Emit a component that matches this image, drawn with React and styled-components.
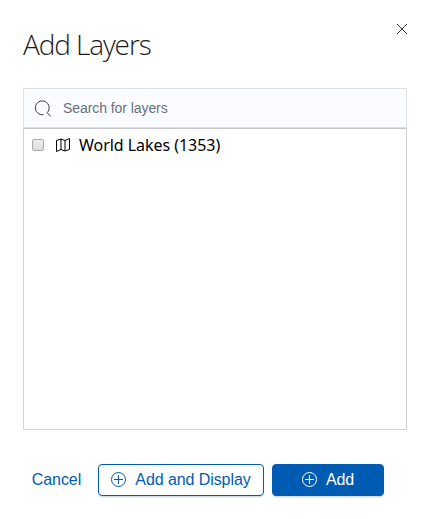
import React from 'react';
import styled, { createGlobalStyle } from 'styled-components';

const GlobalStyle = createGlobalStyle`
  * { box-sizing: border-box; }
  body { margin: 0; background: #fff; }
`;

const Modal = styled.section`
  display: flex;
  flex-direction: column;
  width: 430px;
  height: 519px;
  padding: 24px 23px 23px;
  background: #fff;
  font-family: "Liberation Sans", sans-serif;
`;

const Header = styled.header`
  display: flex;
  justify-content: space-between;
  height: 64px;
`;

const Title = styled.h1`
  margin: 0;
  font: 300 28px/40px "Open Sans", sans-serif;
  letter-spacing: -1.12px;
  color: #1a1c21;
`;

const CloseButton = styled.button`
  display: flex;
  width: 10px;
  height: 10px;
  margin: 0;
  padding: 0;
  border: 0;
  background: none;
  color: #343741;
`;

const SearchField = styled.label`
  display: flex;
  align-items: center;
  width: 384px;
  height: 40px;
  padding-left: 11px;
  gap: 12px;
  border: 1px solid #e0e0ef;
  border-bottom-color: #dddde8;
  background: #fbfcff;
  color: #343741;
`;

const SearchInput = styled.input`
  flex: 1;
  min-width: 0;
  height: 38px;
  padding: 0;
  border: 0;
  outline: 0;
  background: transparent;
  font: 14px "Liberation Sans", sans-serif;
  letter-spacing: -0.005em;
  &::placeholder { color: #69707d; opacity: 1; }
`;

const LayerList = styled.ul`
  width: 384px;
  height: 302px;
  margin: 0;
  padding: 4px 8px;
  border: 1px solid #d3d3d3;
  border-top-color: #c8c8ca;
  list-style: none;
`;

const LayerRow = styled.li`
  display: flex;
  align-items: center;
  height: 24px;
  font: 16px/24px "Noto Sans", sans-serif;
  letter-spacing: -0.04px;
  color: #000;
`;

const Checkbox = styled.input`
  appearance: none;
  width: 12px;
  height: 12px;
  margin: 0 12px 0 0;
  border: 1px solid #a9a9a9;
  border-radius: 2px;
  background: linear-gradient(#eee, #dcdcdc);
`;

const LayerName = styled.span`
  margin-left: 9px;
`;

const Footer = styled.footer`
  display: flex;
  gap: 8px;
  margin-top: 34px;
`;

const Button = styled.button`
  display: flex;
  align-items: center;
  justify-content: center;
  gap: 9px;
  width: ${({ $width }) => $width}px;
  height: 32px;
  padding: 0;
  border: 1px solid ${({ $plain }) => ($plain ? 'transparent' : '#005cb3')};
  border-radius: 4px;
  background: ${({ $filled }) => ($filled ? '#005cb3' : 'transparent')};
  box-shadow: ${({ $plain }) => ($plain ? 'none' : '0 2px 2px -1px rgba(54, 97, 126, 0.3)')};
  color: ${({ $filled }) => ($filled ? '#fff' : '#005cb3')};
  font: 16px/30px "Liberation Sans", sans-serif;
  letter-spacing: -0.005em;
`;

const Icon = styled.svg`
  display: block;
  flex: none;
  overflow: visible;
  fill: none;
  stroke: currentColor;
`;

const PlusIcon = () => (
  <Icon width="15" height="16" viewBox="0 0 15 16">
    <circle cx="7.5" cy="7.5" r="7" />
    <path d="M3 7.5h9M7.5 3v9" />
  </Icon>
);

export default function App() {
  return (
    <>
      <GlobalStyle />
      <Modal>
        <Header>
          <Title>Add Layers</Title>
          <CloseButton aria-label="Close">
            <Icon width="10" height="10" viewBox="0 0 10 10">
              <path d="M0 0l10 10M10 0L0 10" />
            </Icon>
          </CloseButton>
        </Header>
        <SearchField>
          <Icon width="16" height="16" viewBox="0 0 16 16">
            <path d="M8.4 14.6A6.9 6.9 0 1 1 12.1 12.7L15.7 16.4" />
          </Icon>
          <SearchInput placeholder="Search for layers" />
        </SearchField>
        <LayerList>
          <LayerRow>
            <Checkbox type="checkbox" aria-label="World Lakes" />
            <Icon width="14" height="14" viewBox="0 0 14 14">
              <path d="M.5 2.5L5 1l4 1.5 4.5-2v11L9 13l-4-1.5-4.5 2zM5 1v10.5M9 2.5V13" />
            </Icon>
            <LayerName>World Lakes (1353)</LayerName>
          </LayerRow>
        </LayerList>
        <Footer>
          <Button $plain $width={67}>Cancel</Button>
          <Button $width={166}><PlusIcon />Add and Display</Button>
          <Button $filled $width={112}><PlusIcon />Add</Button>
        </Footer>
      </Modal>
    </>
  );
}
